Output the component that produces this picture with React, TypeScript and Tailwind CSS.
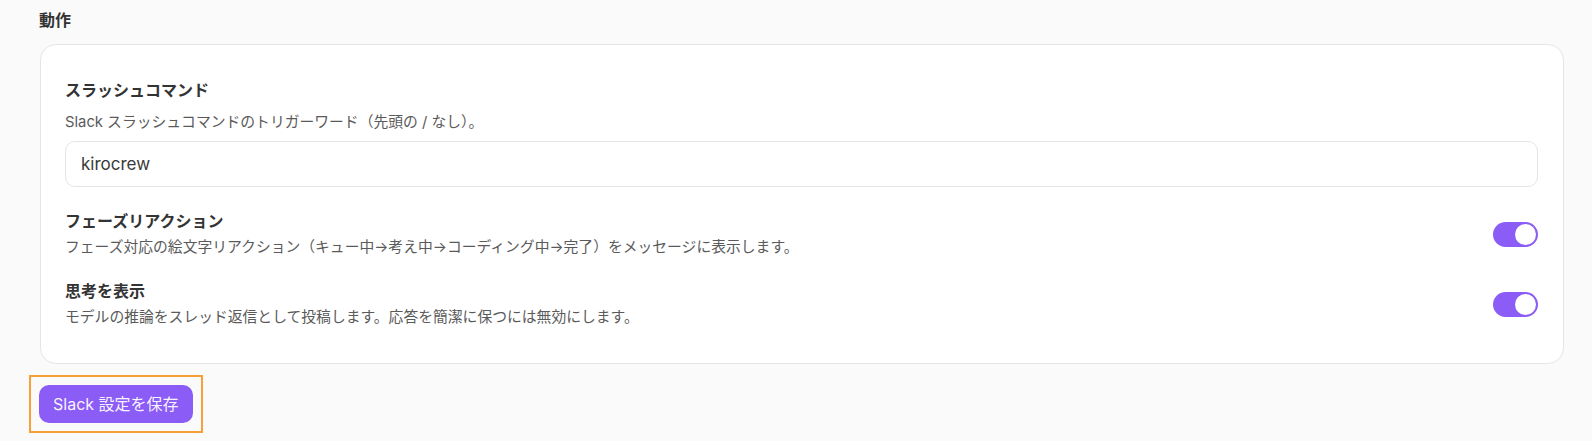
import { useState } from "react";

const font = { fontFamily: 'Inter, "Noto Sans CJK JP", sans-serif' };

const Toggle = ({ on, onChange }: { on: boolean; onChange: () => void }) => {
  return (
    <button
      onClick={onChange}
      className={`relative w-[45px] h-[25px] rounded-full shrink-0 transition-colors ${on ? "bg-[#8b5cf6]" : "bg-[#d4d4d8]"}`}
    >
      <span
        className={`absolute top-[2px] w-[21px] h-[21px] rounded-full bg-white transition-all ${on ? "left-[22px]" : "left-[2px]"}`}
      />
    </button>
  );
};

const App = () => {
  const [command, setCommand] = useState("kirocrew");
  const [reactions, setReactions] = useState(true);
  const [thinking, setThinking] = useState(true);

  return (
    <main style={font} className="min-h-screen bg-[#fafafa] pl-[40px] pr-[28px] pt-[8px]">
      <h2 className="h-[24px] leading-[24px] text-[16px] font-bold text-[#333] -ml-[1px]">動作</h2>
      <section className="mt-[12px] bg-white border border-[#e5e5e5] rounded-2xl pl-[24px] pr-[25px] pt-[35px] pb-[36px]">
        <div>
          <h3 className="text-[16px] leading-[20px] font-bold text-[#333]">スラッシュコマンド</h3>
          <p className="mt-[12px] text-[14.8px] leading-[20px] text-[#5a5a5a]">Slack スラッシュコマンドのトリガーワード（先頭の / なし）。</p>
          <input
            value={command}
            onChange={(e) => setCommand(e.target.value)}
            className="mt-[9px] w-full h-[46px] border border-[#e5e5e5] rounded-[10px] pl-[15px] text-[17px] text-[#3a3a3a] outline-none"
          />
        </div>
        <div className="mt-[24px] flex items-center justify-between">
          <div>
            <h3 className="text-[16px] leading-[20px] font-bold text-[#333]">フェーズリアクション</h3>
            <p className="mt-[6px] text-[14.8px] leading-[20px] text-[#5a5a5a]">フェーズ対応の絵文字リアクション（キュー中→考え中→コーディング中→完了）をメッセージに表示します。</p>
          </div>
          <Toggle on={reactions} onChange={() => setReactions(!reactions)} />
        </div>
        <div className="mt-[24px] flex items-center justify-between">
          <div>
            <h3 className="text-[16px] leading-[20px] font-bold text-[#333]">思考を表示</h3>
            <p className="mt-[6px] text-[14.8px] leading-[20px] text-[#5a5a5a]">モデルの推論をスレッド返信として投稿します。応答を簡潔に保つには無効にします。</p>
          </div>
          <Toggle on={thinking} onChange={() => setThinking(!thinking)} />
        </div>
      </section>
      <div className="mt-[11px] -ml-[11px] inline-block border-2 border-[#f7a035] p-[8px]">
        <button className="h-[38px] px-[14px] rounded-[10px] bg-[#8b5cf6] text-white/95 text-[16px]">Slack 設定を保存</button>
      </div>
    </main>
  );
};

export default App;
